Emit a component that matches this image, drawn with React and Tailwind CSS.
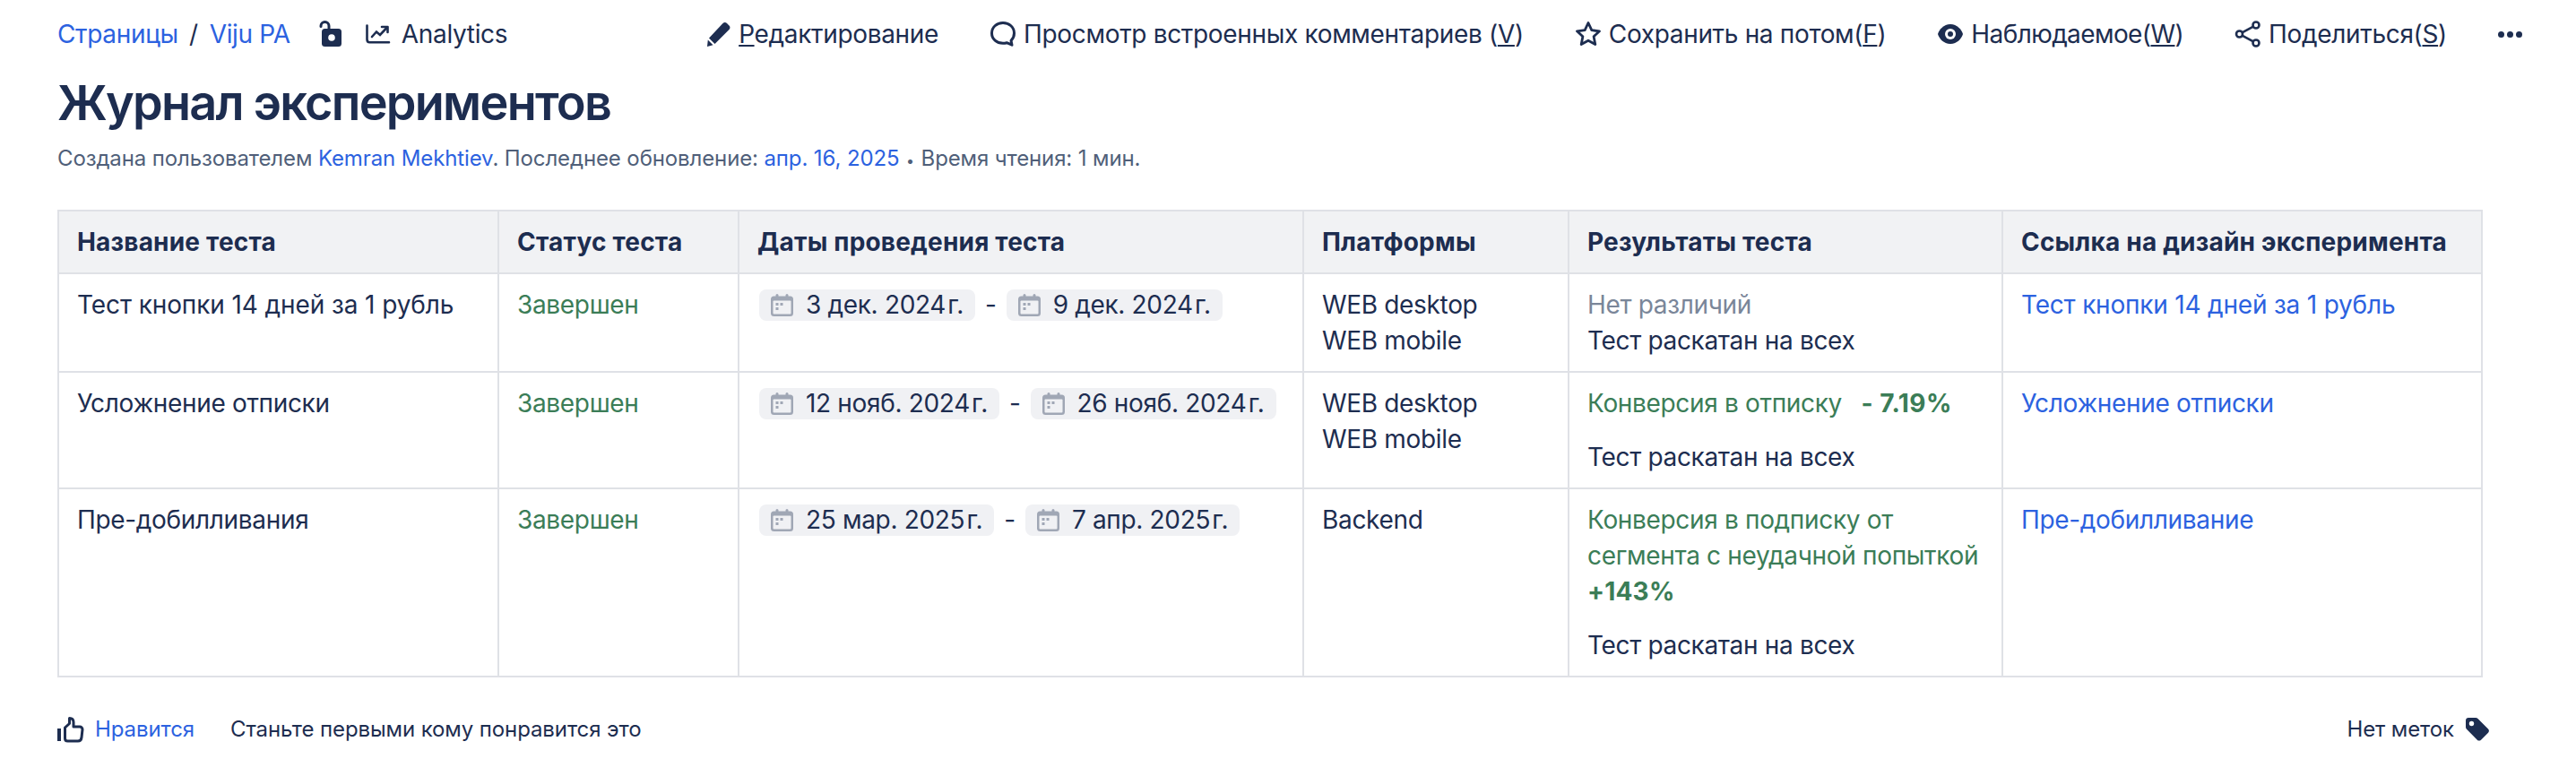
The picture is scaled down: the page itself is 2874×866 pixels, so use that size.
import React from "react";

const ink = "#1d2d50";

function Pencil() {
  return (
    <svg width="28" height="30" viewBox="0 0 28 30" fill={ink}>
      <path d="M18.500 3c1.300-1.300 3.200-1.300 4.500 0l2.500 2.500c1.300 1.300 1.300 3.200 0 4.500L9.500 26 3 19.500zM1.800 21.500l5.700 5.700-6.500 1.800z" />
    </svg>
  );
}
function Bubble() {
  return (
    <svg width="30" height="30" viewBox="0 0 30 30" fill="none" stroke={ink} strokeWidth="3">
      <path d="M15 2.500c7 0 12.500 4.800 12.500 11.500 0 3.300-1.300 6.200-3.500 8.300l1 4.900-5.800-2.500c-1.300.4-2.700.6-4.200.6-7 0-12.500-4.600-12.500-11.300S8 2.500 15 2.500z" strokeLinejoin="round" />
    </svg>
  );
}
function Star() {
  return (
    <svg width="30" height="30" viewBox="0 0 30 30" fill="none" stroke={ink} strokeWidth="2.800" strokeLinejoin="round">
      <path d="M15 2.500l3.800 8.200 8.700 1.100-6.400 6 1.700 8.700-7.800-4.300-7.800 4.300 1.700-8.700-6.400-6 8.700-1.100z" />
    </svg>
  );
}
function Eye() {
  return (
    <svg width="30" height="30" viewBox="0 0 30 30">
      <path d="M15 4c7.500 0 12.500 6 14 11-1.500 5-6.500 11-14 11S2.500 20 1 15C2.500 10 7.500 4 15 4z" fill={ink} />
      <circle cx="15" cy="15" r="6" fill="#fff" />
      <circle cx="15" cy="15" r="3" fill={ink} />
    </svg>
  );
}
function Share() {
  return (
    <svg width="30" height="30" viewBox="0 0 30 30" fill="none" stroke={ink} strokeWidth="2.600">
      <circle cx="5.500" cy="15" r="3.500" />
      <circle cx="24" cy="5" r="3.500" />
      <circle cx="24" cy="25" r="3.500" />
      <path d="M8.500 13.300l12.500-6.700M8.500 16.700l12.500 6.700" />
    </svg>
  );
}
function Lock() {
  return (
    <svg width="26" height="30" viewBox="0 0 26 30">
      <path d="M2 6.500V6a4.500 4.500 0 0 1 9 0v6" fill="none" stroke={ink} strokeWidth="3" strokeLinecap="round" />
      <rect x="3" y="9" width="22" height="20" rx="3.500" fill={ink} />
      <circle cx="14" cy="19" r="3.800" fill="#fff" />
    </svg>
  );
}
function Chart() {
  return (
    <svg width="28" height="22" viewBox="0 0 28 22" fill="none" stroke={ink} strokeWidth="2.600" strokeLinecap="round">
      <path d="M1.500 1.500v15.500c0 2 1.200 3.200 3 3.200H26" />
      <path d="M7 14l5-5.500 4 3.500 7.500-8" />
      <path d="M18 3h6.500v6" strokeLinejoin="round" />
    </svg>
  );
}
function Thumb() {
  return (
    <svg width="30" height="30" viewBox="0 0 30 30" fill="none" stroke={ink} strokeWidth="3" strokeLinejoin="round">
      <path d="M2 14v14" strokeWidth="4" />
      <path d="M8.500 13l5-4.500V2.500c3 0 4.500 2 4.500 4.500v5h7c1.500 0 3 1.200 3 3l-1 9c-.3 2.500-2 4-4 4H11.500c-1.800 0-3-1.200-3-3z" />
    </svg>
  );
}
function Tag() {
  return (
    <svg width="28" height="28" viewBox="0 0 28 28">
      <path d="M4 1h8c1 0 1.800.4 2.500 1l11.500 11.500c1.200 1.200 1.200 3 0 4.200L18 25.700c-1.200 1.200-3 1.200-4.200 0L2 13.800c-.6-.6-1-1.500-1-2.300V4c0-1.700 1.300-3 3-3z" fill={ink} />
      <circle cx="7.500" cy="7.500" r="2.700" fill="#fff" />
    </svg>
  );
}
function Cal() {
  return (
    <svg width="25" height="25" viewBox="0 0 25 25" className="shrink-0">
      <rect x="5.500" y="0" width="3" height="5" rx="1.500" fill="#a0a7b5" />
      <rect x="16.500" y="0" width="3" height="5" rx="1.500" fill="#a0a7b5" />
      <rect x="0" y="2.500" width="25" height="22.500" rx="3.500" fill="#a0a7b5" />
      <rect x="2.500" y="7.500" width="20" height="15" rx="1" fill="#f0f1f4" />
      <rect x="5.500" y="10" width="3" height="3" fill="#a0a7b5" />
      <rect x="10.500" y="10" width="3" height="3" fill="#a0a7b5" />
      <rect x="5.500" y="15" width="3" height="3" fill="#a0a7b5" />
    </svg>
  );
}

function Action({ icon, children, className = "" }) {
  return (
    <span className={`flex items-center gap-[8px] ${className}`}>
      {icon}
      <span>{children}</span>
    </span>
  );
}

function Chip({ children }) {
  return (
    <span className="inline-flex h-[35px] items-center gap-[14px] whitespace-nowrap rounded-[8px] bg-[#f0f1f4] pl-[13px] pr-[13px] leading-[35px]">
      <Cal />
      <span>{children}</span>
    </span>
  );
}

function Dates({ a, b }) {
  return (
    <div className="flex items-center gap-[11px] pl-[2px]">
      <Chip>{a}</Chip>
      <span>-</span>
      <Chip>{b}</Chip>
    </div>
  );
}

const th = "border-2 border-[#dfe1e6] bg-[#f1f2f4] pl-[20px] pr-[20px] py-[14px] text-left align-top font-bold tracking-[0.2px]";
const td = "border-2 border-[#dfe1e6] pl-[20px] pr-[20px] py-[14px] align-top font-normal";
const link = "text-[#2c62e0]";
const green = "text-[#3b7d57]";

export default function App() {
  return (
    <div
      className="h-[866px] w-[2874px] overflow-hidden bg-white text-[28px] leading-[40px] tracking-[-0.33px] text-[#1d2d50]"
      style={{ fontFamily: "Inter, 'Noto Sans', sans-serif" }}
    >
      <div className="flex h-[76px] items-center justify-between pl-[64px] pr-[60px]">
        <div className="flex items-center">
          <span className={link}>Страницы</span>
          <span className="ml-[12px]">/</span>
          <span className={`ml-[13px] ${link}`}>Viju PA</span>
          <span className="ml-[32px]"><Lock /></span>
          <span className="ml-[26px]"><Chart /></span>
          <span className="ml-[12px]">Analytics</span>
        </div>
        <div className="flex items-center gap-[57px]">
          <Action icon={<Pencil />}><u>Р</u>едактирование</Action>
          <Action icon={<Bubble />}>Просмотр встроенных комментариев (<u>V</u>)</Action>
          <Action icon={<Star />}>Сохранить на потом(<u>F</u>)</Action>
          <Action icon={<Eye />} className="tracking-[-0.6px]">Наблюдаемое(<u>W</u>)</Action>
          <Action icon={<Share />}>Поделиться(<u>S</u>)</Action>
          <span className="flex gap-[3px]">
            <span className="size-[7px] rounded-full bg-[#1d2d50]" />
            <span className="size-[7px] rounded-full bg-[#1d2d50]" />
            <span className="size-[7px] rounded-full bg-[#1d2d50]" />
          </span>
        </div>
      </div>

      <h1 className="mt-[7px] pl-[64px] text-[54px] font-semibold leading-[64px] tracking-[-1.75px]">Журнал экспериментов</h1>
      <div className="mt-[12px] pl-[64px] text-[24px] leading-[36px] tracking-[-0.12px] text-[#505f79]">
        Создана пользователем <span className={link}>Kemran Mekhtiev</span>. Последнее обновление:{" "}
        <span className={link}>апр. 16, 2025</span> <span className="mx-[1px] text-[16px]">•</span> Время чтения: 1 мин.
      </div>

      <div className="mt-[37px] px-[64px]">
        <table className="w-[2704px] table-fixed border-collapse">
          <colgroup>
            <col className="w-[491px]" />
            <col className="w-[268px]" />
            <col className="w-[630px]" />
            <col className="w-[296px]" />
            <col className="w-[484px]" />
            <col className="w-[535px]" />
          </colgroup>
          <thead>
            <tr>
              <th className={th}>Название теста</th>
              <th className={th}>Статус теста</th>
              <th className={th}>Даты проведения теста</th>
              <th className={th}>Платформы</th>
              <th className={th}>Результаты теста</th>
              <th className={th}>Ссылка на дизайн эксперимента</th>
            </tr>
          </thead>
          <tbody>
            <tr>
              <td className={`${td} tracking-[-0.1px]`}>Тест кнопки 14 дней за 1 рубль</td>
              <td className={`${td} ${green}`}>Завершен</td>
              <td className={td}><Dates a={"3 дек. 2024\u200aг."} b={"9 дек. 2024\u200aг."} /></td>
              <td className={td}>WEB desktop<br />WEB mobile</td>
              <td className={td}><div className="text-[#7a8699]">Нет различий</div><div>Тест раскатан на всех</div></td>
              <td className={`${td} ${link} tracking-[-0.2px]`}>Тест кнопки 14 дней за 1 рубль</td>
            </tr>
            <tr>
              <td className={td}>Усложнение отписки</td>
              <td className={`${td} ${green}`}>Завершен</td>
              <td className={td}><Dates a={"12 нояб. 2024\u200aг."} b={"26 нояб. 2024\u200aг."} /></td>
              <td className={td}>WEB desktop<br />WEB mobile</td>
              <td className={td}>
                <div className={green}>Конверсия в отписку <span className="ml-[14px] font-bold tracking-[0.5px]">- 7.19%</span></div>
                <div className="mt-[20px]">Тест раскатан на всех</div>
              </td>
              <td className={`${td} ${link}`}>Усложнение отписки</td>
            </tr>
            <tr>
              <td className={td}>Пре-добилливания</td>
              <td className={`${td} ${green}`}>Завершен</td>
              <td className={td}><Dates a={"25 мар. 2025\u200aг."} b={"7 апр. 2025\u200aг."} /></td>
              <td className={td}>Backend</td>
              <td className={td}>
                <div className={green}>Конверсия в подписку от сегмента с неудачной попыткой <span className="font-bold tracking-[0.2px]">+143%</span></div>
                <div className="mt-[20px]">Тест раскатан на всех</div>
              </td>
              <td className={`${td} ${link}`}>Пре-добилливание</td>
            </tr>
          </tbody>
        </table>
      </div>

      <div className="mt-[40px] flex items-center justify-between pl-[64px] pr-[96px] text-[24px] leading-[36px] tracking-[-0.1px]">
        <div className="flex items-center">
          <Thumb />
          <span className={`ml-[12px] ${link}`}>Нравится</span>
          <span className="ml-[40px]">Станьте первыми кому понравится это</span>
        </div>
        <div className="flex items-center gap-[12px]">
          <span>Нет меток</span>
          <Tag />
        </div>
      </div>
    </div>
  );
}
